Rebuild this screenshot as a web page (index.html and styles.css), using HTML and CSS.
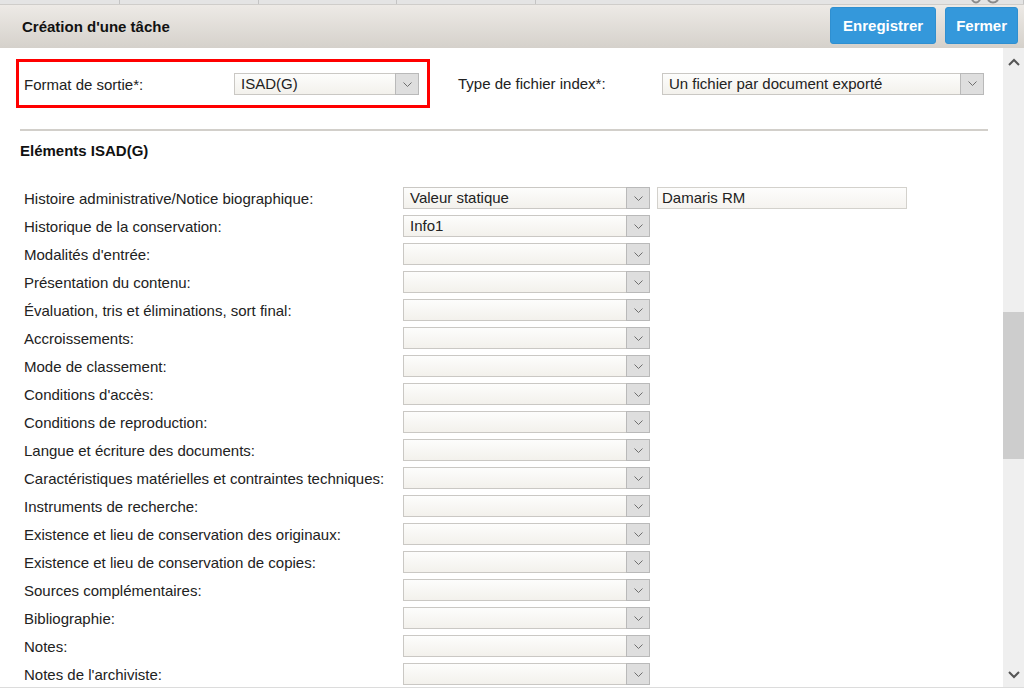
FILE: index.html
```html
<!DOCTYPE html>
<html lang="fr">
<head>
<meta charset="utf-8">
<title>Création d'une tâche</title>
<link rel="stylesheet" href="styles.css">
</head>
<body>
<div class="topstrip">
  <span class="cell c1"></span>
  <span class="cell c2"></span>
  <span class="cell c3"></span>
  <span class="cell c4"></span>
  <span class="cell rest">
    <svg class="tico" width="30" height="4" viewBox="0 0 30 4"><path d="M1 0 Q5 5 9 0" fill="none" stroke="#8a8a8a" stroke-width="2"/><path d="M17 0 Q22 5 27 0" fill="none" stroke="#8a8a8a" stroke-width="2"/></svg>
  </span>
</div>
<header class="header">
  <h1 class="title">Création d'une tâche</h1>
  <div class="actions">
    <button class="btn btn-save">Enregistrer</button>
    <button class="btn btn-close">Fermer</button>
  </div>
</header>
<div class="main">
  <div class="content">
    <div class="toprow">
      <div class="highlight">
        <span class="flabel">Format de sortie*:</span>
        <div class="sel sel-format"><span class="val">ISAD(G)</span><span class="arr"><svg width="9" height="5" viewBox="0 0 9 5"><path d="M0.5 0.5 L4.5 4.5 L8.5 0.5" fill="none" stroke="#6e6e6e" stroke-width="1"/></svg></span></div>
      </div>
      <span class="flabel tlabel">Type de fichier index*:</span>
      <div class="sel sel-type"><span class="val">Un fichier par document exporté</span><span class="arr"><svg width="9" height="5" viewBox="0 0 9 5"><path d="M0.5 0.5 L4.5 4.5 L8.5 0.5" fill="none" stroke="#6e6e6e" stroke-width="1"/></svg></span></div>
    </div>
    <div class="rule"></div>
    <h2 class="section">Eléments ISAD(G)</h2>
    <div class="rows" id="rows"></div>
  </div>
  <div class="scrollbar">
    <div class="sb-btn"><svg width="12" height="8" viewBox="0 0 12 8"><path d="M1 7 L6 2 L11 7" fill="none" stroke="#555" stroke-width="2"/></svg></div>
    <div class="sb-track"><div class="sb-thumb"></div></div>
    <div class="sb-btn sb-down"><svg width="12" height="8" viewBox="0 0 12 8"><path d="M1 1 L6 6 L11 1" fill="none" stroke="#555" stroke-width="2"/></svg></div>
  </div>
</div>
<script>
  var rows = [
    ["Histoire administrative/Notice biographique:", "Valeur statique", "Damaris RM"],
    ["Historique de la conservation:", "Info1"],
    ["Modalités d'entrée:", ""],
    ["Présentation du contenu:", ""],
    ["Évaluation, tris et éliminations, sort final:", ""],
    ["Accroissements:", ""],
    ["Mode de classement:", ""],
    ["Conditions d'accès:", ""],
    ["Conditions de reproduction:", ""],
    ["Langue et écriture des documents:", ""],
    ["Caractéristiques matérielles et contraintes techniques:", ""],
    ["Instruments de recherche:", ""],
    ["Existence et lieu de conservation des originaux:", ""],
    ["Existence et lieu de conservation de copies:", ""],
    ["Sources complémentaires:", ""],
    ["Bibliographie:", ""],
    ["Notes:", ""],
    ["Notes de l'archiviste:", ""]
  ];
  var chev = '<svg width="9" height="5" viewBox="0 0 9 5"><path d="M0.5 0.5 L4.5 4.5 L8.5 0.5" fill="none" stroke="#6e6e6e" stroke-width="1"/></svg>';
  var html = "";
  rows.forEach(function (r) {
    html += '<div class="row"><span class="rlabel">' + r[0] + '</span>' +
      '<div class="sel sel-row"><span class="val">' + r[1] + '</span><span class="arr">' + chev + '</span></div>' +
      (r[2] ? '<div class="txt">' + r[2] + '</div>' : '') + '</div>';
  });
  document.getElementById("rows").innerHTML = html;
</script>
</body>
</html>
```
FILE: styles.css
```css
* { box-sizing: border-box; }
html, body { margin: 0; padding: 0; }
body {
  width: 1024px;
  height: 688px;
  overflow: hidden;
  font-family: "Liberation Sans", Arial, sans-serif;
  font-size: 15px;
  color: #222;
  background: #fff;
}
.topstrip {
  display: flex;
  height: 5px;
  background: #e4e4e4;
  border-bottom: 1px solid #cfcdca;
}
.cell { display: block; height: 4px; border-right: 1px solid #c4c4c4; }
.c1 { width: 120px; }
.c2 { width: 139px; }
.c3 { width: 138px; }
.c4 { width: 139px; }
.rest { flex: 1; display: flex; justify-content: flex-end; padding-right: 22px; }
.tico { display: block; }
.header {
  display: flex;
  justify-content: space-between;
  align-items: center;
  height: 43px;
  padding-left: 22px;
  background: linear-gradient(#edeae6, #d5d1cb);
}
.title {
  margin: 0;
  font-size: 15px;
  font-weight: bold;
  color: #111;
}
.actions {
  display: flex;
  gap: 9px;
  align-self: flex-start;
  padding-top: 2px;
  padding-right: 6px;
}
.btn {
  height: 37px;
  border: 1px solid #2f8fd0;
  border-radius: 3px;
  background: #3498db;
  color: #fff;
  font-family: "Liberation Sans", Arial, sans-serif;
  font-size: 15px;
  font-weight: bold;
}
.btn-save { padding: 0 12px; }
.btn-close { padding: 0 10px; }
.main {
  display: flex;
  height: 640px;
  border-bottom: 1px solid #dcdcdc;
}
.content {
  flex: 1;
  overflow: hidden;
  padding: 11px 0 0 16px;
}
.toprow { display: flex; align-items: center; }
.highlight {
  display: flex;
  align-items: center;
  border: 3px solid #ff0000;
  padding: 11px 8px 10px 5px;
}
.flabel { display: block; width: 210px; }
.tlabel { width: 204px; margin-left: 28px; }
.sel {
  display: flex;
  height: 22px;
  border: 1px solid #cac8c4;
  background: linear-gradient(#fdfdfc, #f3f1ec);
}
.sel-format { width: 185px; }
.sel-type { width: 322px; }
.sel-row { width: 247px; }
.val {
  flex: 1;
  padding-left: 6px;
  line-height: 20px;
  white-space: nowrap;
  overflow: hidden;
}
.arr {
  width: 24px;
  display: flex;
  align-items: center;
  justify-content: center;
  background: #dedede;
  border: 1px solid #b9b9b9;
  margin: -1px -1px -1px 0;
}
.arr svg { display: block; }
.rule {
  height: 2px;
  width: 968px;
  margin: 21px 0 0 4px;
  background: #d2cfca;
}
.section {
  margin: 12px 0 0 4px;
  font-size: 15px;
  line-height: 16px;
  font-weight: bold;
  color: #111;
}
.rows { margin-top: 25px; padding-left: 8px; }
.row {
  display: flex;
  align-items: center;
  height: 28px;
}
.rlabel { display: block; width: 379px; white-space: nowrap; }
.txt {
  width: 250px;
  height: 22px;
  margin-left: 7px;
  padding-left: 4px;
  line-height: 20px;
  border: 1px solid #d3d1cc;
  background: linear-gradient(#fdfdfc, #f5f3ef);
}
.scrollbar {
  width: 21px;
  display: flex;
  flex-direction: column;
  background: #efefef;
}
.sb-btn {
  height: 28px;
  display: flex;
  align-items: center;
  justify-content: center;
}
.sb-btn svg { display: block; }
.sb-down { height: 24px; }
.sb-track { flex: 1; }
.sb-thumb {
  margin-top: 236px;
  height: 147px;
  background: #cdcdcd;
}
```
